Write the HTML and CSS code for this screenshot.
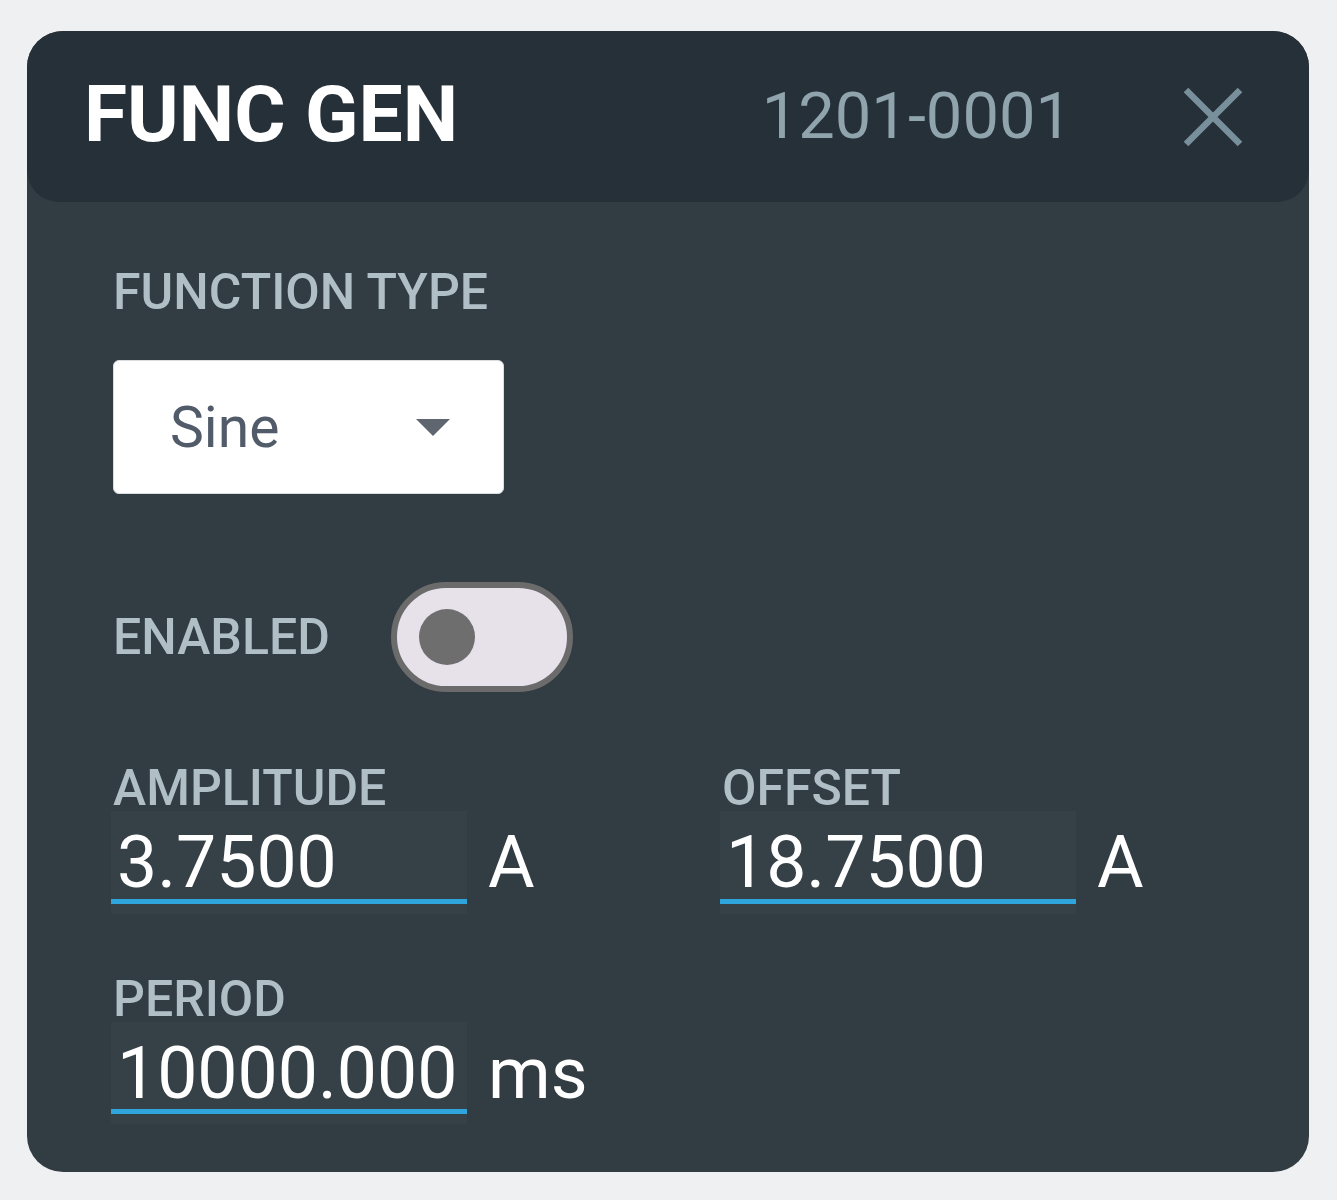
FILE: index.html
```html
<!DOCTYPE html>
<html>

<head>
    <meta charset="UTF-8">
    <link rel="stylesheet" href="styles.css">
</head>

<body>

    <div class="panel">
        <div class="panel-header">
            <div class="panel-title">FUNC GEN</div>
            <div class="panel-serial">1201-0001</div>
            <div class="panel-close">
                <svg width="60" height="60" viewBox="0 0 60 60">
                    <path d="M3 3 L57 57 M57 3 L3 57" stroke="#78909c" stroke-width="6.5" fill="none" />
                </svg>
            </div>
        </div>

        <div class="panel-body">
            <div class="field-label">FUNCTION TYPE</div>
            <div class="select-box">
                <span class="select-text">Sine</span>
                <span class="select-arrow"></span>
            </div>

            <div class="toggle-row">
                <div class="field-label">ENABLED</div>
                <div class="toggle">
                    <div class="toggle-knob"></div>
                </div>
            </div>

            <div class="field-grid">
                <div class="field">
                    <div class="field-label">AMPLITUDE</div>
                    <div class="value-row">
                        <div class="value-input">
                            <div class="value-text">3.7500</div>
                        </div>
                        <span class="value-unit">A</span>
                    </div>
                </div>
                <div class="field">
                    <div class="field-label">OFFSET</div>
                    <div class="value-row">
                        <div class="value-input">
                            <div class="value-text">18.7500</div>
                        </div>
                        <span class="value-unit">A</span>
                    </div>
                </div>
                <div class="field">
                    <div class="field-label">PERIOD</div>
                    <div class="value-row">
                        <div class="value-input">
                            <div class="value-text">10000.000</div>
                        </div>
                        <span class="value-unit">ms</span>
                    </div>
                </div>
            </div>
        </div>
    </div>

</body>

</html>
```

FILE: styles.css
```css
body {
    margin: 0;
    background-color: #eef0f2;
    font-family: Roboto, "Liberation Sans", sans-serif;
}

.panel {
    margin: 31px 0 0 27px;
    width: 1282px;
    height: 1141px;
    border-radius: 36px;
    background-color: #323c43;
    overflow: hidden;
}

.panel-header {
    height: 171px;
    background-color: #263038;
    border-radius: 0 0 32px 32px;
    display: flex;
    align-items: center;
    padding: 0 66px 0 57px;
    box-sizing: border-box;
}

.panel-title {
    flex: 1;
    color: #ffffff;
    font-size: 78.5px;
    font-weight: bold;
    line-height: 1;
    margin-top: -4px;
}

.panel-serial {
    color: #90a4ae;
    font-size: 65px;
    line-height: 1;
    margin-right: 111px;
}

.panel-close {
    display: flex;
}

.panel-body {
    padding: 65px 0 0 86px;
}

.field-label {
    color: #b0bec5;
    font-size: 50px;
    font-weight: 500;
    line-height: 1;
}

.select-box {
    margin-top: 43px;
    width: 391px;
    height: 134px;
    box-sizing: border-box;
    background-color: #ffffff;
    border: 1px solid #d9dde0;
    border-radius: 6px;
    display: flex;
    align-items: center;
    padding: 0 53px 0 56px;
}

.select-text {
    flex: 1;
    color: #525b69;
    font-size: 57px;
}

.select-arrow {
    width: 0;
    height: 0;
    border-left: 17px solid transparent;
    border-right: 17px solid transparent;
    border-top: 17px solid #5f6670;
}

.toggle-row {
    margin-top: 88px;
    display: flex;
    align-items: center;
    gap: 61px;
}

.toggle {
    width: 182px;
    height: 110px;
    box-sizing: border-box;
    border: 6px solid #6b6b6b;
    border-radius: 55px;
    background-color: #e7e1ea;
    display: flex;
    align-items: center;
    padding-left: 22px;
}

.toggle-knob {
    width: 56px;
    height: 56px;
    border-radius: 50%;
    background-color: #6e6e6e;
}

.field-grid {
    margin-top: 71px;
    display: grid;
    grid-template-columns: 609px 1fr;
    row-gap: 60px;
}

.value-row {
    margin-top: -2px;
    display: flex;
    align-items: flex-start;
    margin-left: -2px;
}

.value-input {
    width: 356px;
    background-color: #364047;
    padding-bottom: 10px;
}

.value-text {
    color: #ffffff;
    font-size: 71.5px;
    line-height: 1;
    padding: 16px 0 0 6px;
    border-bottom: 5px solid #2ea6dd;
}

.value-unit {
    color: #ffffff;
    font-size: 71.5px;
    line-height: 1;
    padding-top: 16px;
    margin-left: 21px;
}
```
